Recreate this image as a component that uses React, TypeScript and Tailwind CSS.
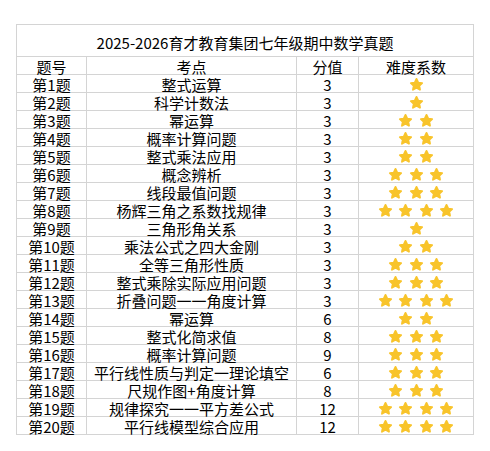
const rows: [string, number, number][] = [
  ["整式运算", 3, 1],
  ["科学计数法", 3, 1],
  ["幂运算", 3, 2],
  ["概率计算问题", 3, 2],
  ["整式乘法应用", 3, 2],
  ["概念辨析", 3, 3],
  ["线段最值问题", 3, 3],
  ["杨辉三角之系数找规律", 3, 4],
  ["三角形角关系", 3, 1],
  ["乘法公式之四大金刚", 3, 2],
  ["全等三角形性质", 3, 3],
  ["整式乘除实际应用问题", 3, 3],
  ["折叠问题一一角度计算", 3, 4],
  ["幂运算", 6, 2],
  ["整式化简求值", 8, 3],
  ["概率计算问题", 9, 3],
  ["平行线性质与判定一理论填空", 6, 3],
  ["尺规作图+角度计算", 8, 3],
  ["规律探究一一平方差公式", 12, 4],
  ["平行线模型综合应用", 12, 4],
];

function Star() {
  return (
    <svg viewBox="0 0 24 24" className="w-[15px] h-[15px]">
      <path
        d="M12 3 L14.8 8.9 L21 9.7 L16.4 14 L17.6 20.3 L12 17.2 L6.4 20.3 L7.6 14 L3 9.7 L9.2 8.9 Z"
        fill="#F8C42B"
        stroke="#F8C42B"
        strokeWidth="3"
        strokeLinejoin="round"
      />
    </svg>
  );
}

const cell = "h-[18px] pt-[2px] border-r border-b border-[#d4d4d4] flex items-center justify-center whitespace-nowrap";

export default function App() {
  return (
    <div className="min-h-[451px] bg-white pt-[24px] pl-[16px] font-['Noto_Sans_CJK_SC',sans-serif] text-[15px] leading-[18px] text-black">
      <div className="grid grid-cols-[70px_210px_62px_115px] w-[458px] border-l border-t border-[#d4d4d4]">
        <div className="col-span-4 h-[32px] pt-[4px] border-r border-b border-[#d4d4d4] flex items-center justify-center">
          2025-2026育才教育集团七年级期中数学真题
        </div>
        <div className={cell}>题号</div>
        <div className={cell}>考点</div>
        <div className={cell}>分值</div>
        <div className={cell}>难度系数</div>
        {rows.map(([topic, score, level], i) => (
          <div key={i} className="contents">
            <div className={cell}>第{i + 1}题</div>
            <div className={cell}>{topic}</div>
            <div className={cell}>{score}</div>
            <div className={`${cell} gap-[5.5px]`}>
              {Array.from({ length: level }).map((_, j) => (
                <Star key={j} />
              ))}
            </div>
          </div>
        ))}
      </div>
    </div>
  );
}
